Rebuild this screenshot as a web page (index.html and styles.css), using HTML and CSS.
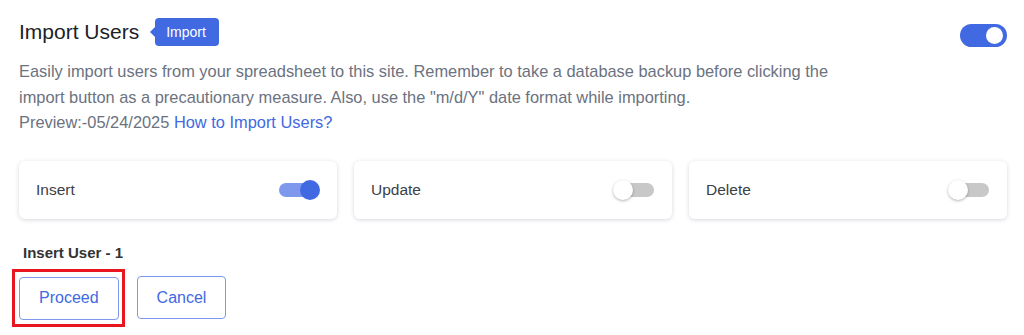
FILE: index.html
```html
<!DOCTYPE html>
<html>
<head>
	<meta charset="utf-8">
	<title>Import Users</title>
	<link rel="stylesheet" href="styles.css">
</head>
<body>

<div class="panel">
	<div class="panel-head">
		<div class="title-wrap">
			<h2 class="title">Import Users</h2>
			<span class="badge">Import</span>
		</div>
		<span class="switch switch-on"><span class="switch-knob"></span></span>
	</div>

	<p class="intro">
		Easily import users from your spreadsheet to this site. Remember to take a database backup before clicking the
		import button as a precautionary measure. Also, use the "m/d/Y" date format while importing.<br>
		Preview:-05/24/2025 <a href="#" class="help-link">How to Import Users?</a>
	</p>

	<div class="modes">
		<div class="mode-card">
			<span class="mode-label">Insert</span>
			<span class="toggle toggle-on"><span class="toggle-knob"></span></span>
		</div>
		<div class="mode-card">
			<span class="mode-label">Update</span>
			<span class="toggle"><span class="toggle-knob"></span></span>
		</div>
		<div class="mode-card">
			<span class="mode-label">Delete</span>
			<span class="toggle"><span class="toggle-knob"></span></span>
		</div>
	</div>

	<p class="summary">Insert User - 1</p>

	<div class="actions">
		<span class="highlight"><button class="btn">Proceed</button></span>
		<button class="btn">Cancel</button>
	</div>
</div>

</body>
</html>
```

FILE: styles.css
```css
* {
	box-sizing: border-box;
}

body {
	margin: 0;
	background: #fff;
	font-family: "Liberation Sans", Arial, sans-serif;
	color: #1f2328;
}

.panel {
	padding: 17px 17px 0 19px;
}

.panel-head {
	display: flex;
	align-items: center;
	justify-content: space-between;
	height: 30px;
}

.title-wrap {
	display: flex;
	align-items: center;
}

.title {
	margin: 0;
	font-size: 21px;
	font-weight: normal;
	color: #1d2127;
}

.badge {
	position: relative;
	margin-left: 16px;
	padding: 0 13px 0 11px;
	height: 28px;
	line-height: 28px;
	border-radius: 4px;
	background: #4169e1;
	color: #fff;
	font-size: 14px;
}

.badge::before {
	content: "";
	position: absolute;
	left: -5px;
	top: 9px;
	border-top: 5px solid transparent;
	border-bottom: 5px solid transparent;
	border-right: 5px solid #4169e1;
}

.switch {
	display: inline-block;
	position: relative;
	width: 47px;
	height: 23px;
	border-radius: 12px;
	background: #4169e1;
	margin-top: 6px;
}

.switch-knob {
	position: absolute;
	top: 3px;
	right: 4px;
	width: 17px;
	height: 17px;
	border-radius: 50%;
	background: #fff;
}

.intro {
	margin: 12px 0 0;
	max-width: 840px;
	font-size: 16.4px;
	line-height: 25.5px;
	color: #6b7280;
}

.help-link {
	color: #4169e1;
	text-decoration: none;
}

.modes {
	display: grid;
	grid-template-columns: repeat(3, 1fr);
	gap: 17px;
	margin-top: 25px;
}

.mode-card {
	display: flex;
	align-items: center;
	justify-content: space-between;
	height: 58px;
	padding: 0 18px 0 17px;
	border-radius: 6px;
	background: #fff;
	box-shadow: 0 1px 4px rgba(30, 40, 70, 0.18);
}

.mode-label {
	font-size: 15.5px;
	color: #3c4047;
}

.toggle {
	position: relative;
	display: inline-block;
	width: 40px;
	height: 14px;
	border-radius: 7px;
	background: #c8c8c8;
}

.toggle-knob {
	position: absolute;
	top: -3px;
	left: -1px;
	width: 20px;
	height: 20px;
	border-radius: 50%;
	background: #fff;
	box-shadow: 0 1px 3px rgba(0, 0, 0, 0.3);
}

.toggle-on {
	background: #7d98ec;
}

.toggle-on .toggle-knob {
	left: auto;
	right: -1px;
	background: #4169e1;
	box-shadow: none;
}

.summary {
	margin: 25px 0 0 4px;
	font-size: 15px;
	font-weight: bold;
	color: #333;
}

.actions {
	display: flex;
	align-items: center;
	gap: 12px;
	margin-top: 8px;
	margin-left: -7px;
}

.highlight {
	display: inline-block;
	padding: 5px 3px 4px 4px;
	border: 3px solid #e8161f;
}

.btn {
	height: 43px;
	padding: 0 19px;
	border: 1px solid #7d98ec;
	border-radius: 4px;
	background: #fff;
	color: #4169e1;
	font-family: "Liberation Sans", Arial, sans-serif;
	font-size: 16px;
}
```
